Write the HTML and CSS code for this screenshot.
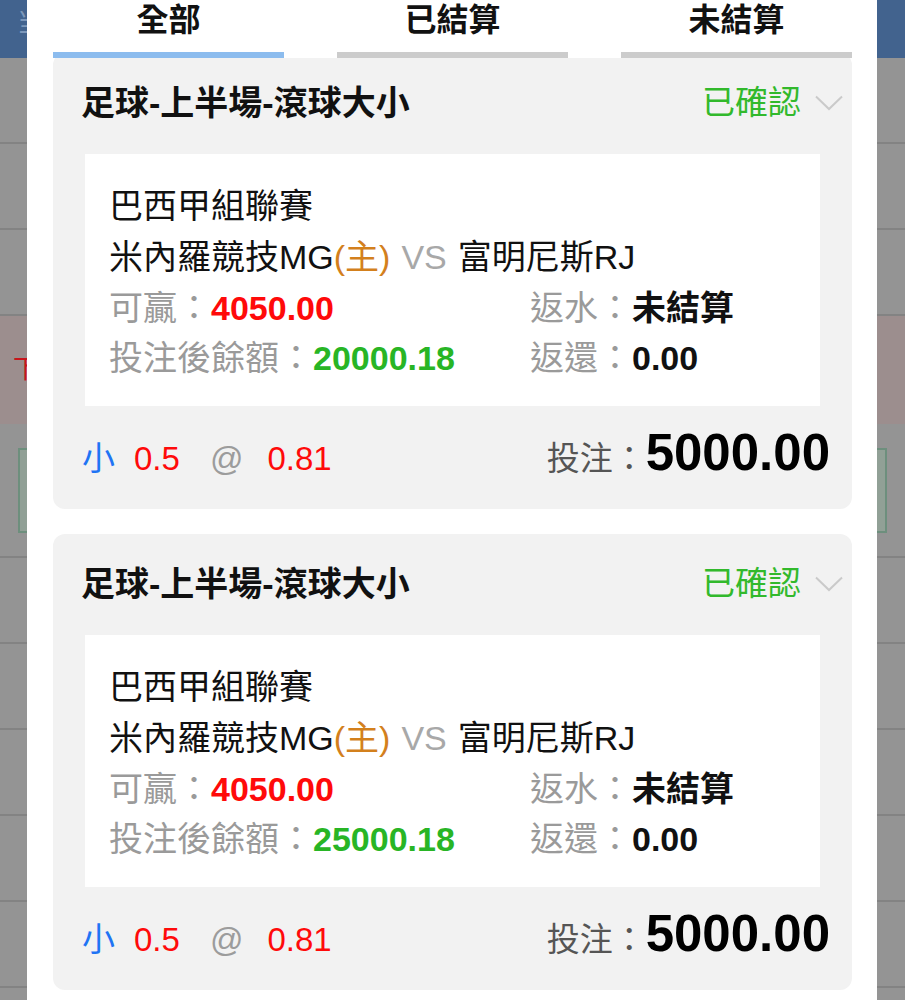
FILE: index.html
```html
<!DOCTYPE html>
<html lang="zh-Hant">
<head>
    <meta charset="UTF-8">
    <meta name="viewport" content="width=device-width, initial-scale=1.0">
    <title>注單記錄</title>
    <link rel="stylesheet" href="styles.css">
</head>
<body>
    <!-- page under the popup -->
    <div class="page">
        <header class="topbar"><span class="topbar-title">当</span></header>
        <div class="row"></div>
        <div class="row"></div>
        <div class="row"></div>
        <div class="row row-alert"><span class="alert-text">下</span></div>
        <div class="row row-form"><div class="input-box"></div></div>
        <div class="row"></div>
        <div class="row"></div>
        <div class="row"></div>
        <div class="row"></div>
        <div class="row"></div>
    </div>

    <div class="mask">
        <div class="modal">
            <nav class="tabs">
                <div class="tab active">全部</div>
                <div class="tab">已結算</div>
                <div class="tab">未結算</div>
            </nav>

            <div class="bet-list">
                <section class="bet-card">
                    <div class="bet-head">
                        <span class="bet-title">足球-上半場-滾球大小</span>
                        <span class="bet-status">已確認</span>
                        <svg class="chevron" width="28" height="16" viewBox="0 0 28 16">
                            <polyline points="1,1.5 14,14 27,1.5" fill="none" stroke="#cacaca" stroke-width="2"/>
                        </svg>
                    </div>
                    <div class="bet-detail">
                        <div class="detail-line">巴西甲組聯賽</div>
                        <div class="detail-line">米內羅競技MG<span class="home">(主)</span><span class="vs">VS</span>富明尼斯RJ</div>
                        <div class="detail-grid">
                            <div><span class="label">可贏：</span><b class="red">4050.00</b></div>
                            <div><span class="label">返水：</span><b>未結算</b></div>
                            <div><span class="label">投注後餘額：</span><b class="green">20000.18</b></div>
                            <div><span class="label">返還：</span><b>0.00</b></div>
                        </div>
                    </div>
                    <div class="bet-foot">
                        <span class="pick">小</span>
                        <span class="line">0.5</span>
                        <span class="at">@</span>
                        <span class="odds">0.81</span>
                        <div class="stake"><span class="stake-label">投注：</span><span class="stake-amount">5000.00</span></div>
                    </div>
                </section>

                <section class="bet-card">
                    <div class="bet-head">
                        <span class="bet-title">足球-上半場-滾球大小</span>
                        <span class="bet-status">已確認</span>
                        <svg class="chevron" width="28" height="16" viewBox="0 0 28 16">
                            <polyline points="1,1.5 14,14 27,1.5" fill="none" stroke="#cacaca" stroke-width="2"/>
                        </svg>
                    </div>
                    <div class="bet-detail">
                        <div class="detail-line">巴西甲組聯賽</div>
                        <div class="detail-line">米內羅競技MG<span class="home">(主)</span><span class="vs">VS</span>富明尼斯RJ</div>
                        <div class="detail-grid">
                            <div><span class="label">可贏：</span><b class="red">4050.00</b></div>
                            <div><span class="label">返水：</span><b>未結算</b></div>
                            <div><span class="label">投注後餘額：</span><b class="green">25000.18</b></div>
                            <div><span class="label">返還：</span><b>0.00</b></div>
                        </div>
                    </div>
                    <div class="bet-foot">
                        <span class="pick">小</span>
                        <span class="line">0.5</span>
                        <span class="at">@</span>
                        <span class="odds">0.81</span>
                        <div class="stake"><span class="stake-label">投注：</span><span class="stake-amount">5000.00</span></div>
                    </div>
                </section>
            </div>
        </div>
    </div>
</body>
</html>
```

FILE: styles.css
```css
body {
    margin: 0;
    font-family: "Liberation Sans", "Noto Sans CJK TC", sans-serif;
    background: #949494;
    color: #111;
    overflow: hidden;
}

/* page behind the popup */
.page {
    height: 1000px;
}
.topbar {
    height: 58px;
    background: #42638e;
    padding-left: 17px;
}
.topbar-title {
    font-size: 26px;
    line-height: 46px;
    color: #7d98bb;
}
.row {
    height: 84px;
    border-bottom: 2px solid #838383;
}
.row-alert {
    height: 108px;
    background: #9c8e8e;
    border-bottom: none;
}
.alert-text {
    display: block;
    padding: 38px 0 0 13px;
    font-size: 26px;
    line-height: 30px;
    color: #c8141c;
}
.row-form {
    box-sizing: border-box;
    height: 134px;
    padding-top: 24px;
}
.input-box {
    margin: 0 18px;
    height: 81px;
    background: #91a096;
    border: 2px solid #6d8f7d;
}

/* popup */
.mask {
    position: fixed;
    inset: 0;
}
.modal {
    margin: 0 28px 0 27px;
    height: 100%;
    background: #fff;
}
.tabs {
    position: relative;
    z-index: 1;
    display: flex;
    justify-content: space-between;
    padding: 0 25px 0 26px;
    background: #fff;
}
.tab {
    width: 231px;
    padding-bottom: 12px;
    border-bottom: 6px solid #cccccc;
    text-align: center;
    font-size: 32px;
    line-height: 40px;
    font-weight: 700;
    color: #111;
}
.tab.active {
    border-bottom-color: #8cbcee;
}

.bet-list {
    margin-top: -5px;
    padding: 0 25px 0 26px;
    display: flex;
    flex-direction: column;
    gap: 25px;
}
.bet-card {
    background: #f2f2f2;
    border-radius: 12px;
}
.bet-head {
    display: flex;
    align-items: center;
    padding: 30px 9px 31px 28px;
    line-height: 40px;
}
.bet-title {
    font-size: 34px;
    font-weight: 700;
    color: #111;
}
.bet-status {
    margin-left: auto;
    font-size: 33px;
    color: #32b92c;
}
.chevron {
    margin-left: 14px;
}

.bet-detail {
    box-sizing: border-box;
    height: 252px;
    margin: 0 32px;
    padding: 27px 20px 0 24px;
    background: #fff;
    font-size: 34px;
    line-height: 51px;
    color: #111;
}
.detail-line {
    height: 51px;
}
.bet-detail b {
    font-weight: 700;
}
.home {
    color: #d3801d;
}
.vs {
    margin: 0 11px;
    color: #a8a8a8;
}
.detail-grid {
    display: grid;
    grid-template-columns: 421px auto;
    grid-auto-rows: 50px;
}
.label,
.stake-label {
    font-family: "Noto Sans CJK TC", sans-serif;
    line-height: 1;
}
.label {
    color: #9a9a9a;
}
.red {
    color: #ff0a0a;
}
.green {
    color: #28b525;
}

.bet-foot {
    box-sizing: border-box;
    height: 103px;
    display: flex;
    align-items: center;
    padding: 3px 22px 0 29px;
    font-size: 33px;
    line-height: 56px;
}
.pick {
    color: #1f74f4;
    margin-right: 19px;
}
.line {
    color: #ff0a0a;
    margin-right: 30px;
}
.at {
    color: #9c9c9c;
    margin-right: 24px;
}
.odds {
    color: #ff0a0a;
}
.stake {
    margin-left: auto;
}
.stake-label {
    color: #555;
}
.stake-amount {
    font-size: 51px;
    line-height: 40px;
    font-weight: 700;
    color: #000;
}
```
